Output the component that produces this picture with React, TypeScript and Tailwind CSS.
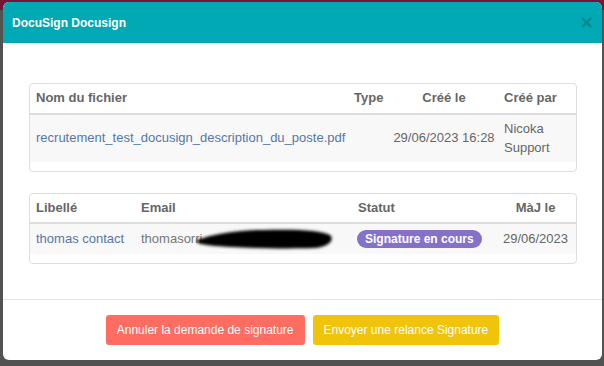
import React from 'react'

const files = [
  {
    name: 'recrutement_test_docusign_description_du_poste.pdf',
    type: '',
    createdAt: '29/06/2023 16:28',
    createdBy: 'Nicoka Support',
  },
]

const signers = [
  { label: 'thomas contact', email: 'thomasorri', status: 'Signature en cours', updatedAt: '29/06/2023' },
]

function CloseIcon() {
  return (
    <svg className="w-[11px] h-[11px]" viewBox="0 0 12 12" fill="none" stroke="currentColor" strokeWidth={2.6} strokeLinecap="square">
      <path d="M2 2l8 8M10 2l-8 8" />
    </svg>
  )
}

// scribble that hides the rest of the email
function Redacted() {
  return (
    <svg className="w-[144px] h-[32px] -ml-[9px] -my-[8px] shrink-0" viewBox="0 0 144 32">
      <defs>
        <filter id="blur" x="-10%" y="-40%" width="120%" height="180%">
          <feGaussianBlur stdDeviation="1.8" />
        </filter>
      </defs>
      <path
        d="M4 17 C 18 12, 40 7, 70 7 C 102 6, 128 7, 137 12 C 142 17, 136 24, 120 25 C 92 26, 50 25, 22 23 C 8 22, 2 20, 4 17 Z"
        fill="#000"
        filter="url(#blur)"
      />
    </svg>
  )
}

export default function App() {
  return (
    <div className="w-[604px] h-[366px] overflow-hidden bg-[linear-gradient(to_bottom,#74163a_0,#74163a_10px,#525252_10px)] pt-[2px] pl-[3px] font-['Liberation_Sans',Arial,sans-serif]">
      <div className="w-[599px] h-[358px] bg-white rounded-[6px] overflow-hidden flex flex-col">
        {/* Header */}
        <div className="h-[41px] shrink-0 bg-[#00a9b4] flex items-center justify-between pl-[9px] pr-[10px]">
          <h4 className="text-white font-bold text-[12px] leading-none">DocuSign Docusign</h4>
          <button className="text-[#00878f]">
            <CloseIcon />
          </button>
        </div>

        {/* Body */}
        <div className="flex-1 pt-[40px] pl-[26px] pr-[25px] flex flex-col gap-[21px] text-[13px] leading-[18.5px]">
          <div className="border border-[#dddddd] rounded-[4px] pb-[9px]">
            <div className="grid grid-cols-[319px_40px_110px_77px] h-[31px] items-center border-b-2 border-[#dddddd] font-bold text-[#666666]">
              <div className="pl-[6px]">Nom du fichier</div>
              <div className="pl-[5px]">Type</div>
              <div className="text-center">Créé le</div>
              <div className="pl-[5px]">Créé par</div>
            </div>
            {files.map((f) => (
              <div key={f.name} className="grid grid-cols-[319px_40px_110px_77px] h-[47px] items-center bg-[#f8f8f8]">
                <div className="pl-[6px] text-[#5577a6] whitespace-nowrap">{f.name}</div>
                <div className="pl-[5px] text-[#666666]">{f.type}</div>
                <div className="text-center text-[#666666] whitespace-nowrap">{f.createdAt}</div>
                <div className="pl-[5px] text-[#666666]">{f.createdBy}</div>
              </div>
            ))}
          </div>

          <div className="border border-[#dddddd] rounded-[4px] pb-[9px]">
            <div className="grid grid-cols-[105px_217px_143px_81px] h-[30px] items-center border-b-2 border-[#dddddd] font-bold text-[#666666]">
              <div className="pl-[6px]">Libellé</div>
              <div className="pl-[6px]">Email</div>
              <div className="pl-[6px]">Statut</div>
              <div className="text-center">MàJ le</div>
            </div>
            {signers.map((s) => (
              <div key={s.label} className="grid grid-cols-[105px_217px_143px_81px] h-[30px] items-center bg-[#f8f8f8]">
                <div className="pl-[6px] text-[#5577a6] whitespace-nowrap">{s.label}</div>
                <div className="pl-[6px] text-[#777777] flex items-center">
                  <span>{s.email}</span>
                  <Redacted />
                </div>
                <div className="pl-[5px]">
                  <span className="inline-flex items-center h-[18px] px-[8px] rounded-full bg-[#8572c8] text-white font-bold text-[12px] leading-none">
                    {s.status}
                  </span>
                </div>
                <div className="text-center text-[#666666]">{s.updatedAt}</div>
              </div>
            ))}
          </div>
        </div>

        {/* Footer */}
        <div className="h-[61px] shrink-0 border-t border-[#e5e5e5] flex items-center justify-center gap-2">
          <button className="h-[30px] px-[11px] rounded-[3px] bg-[#ff6c61] text-white text-[12px]">
            Annuler la demande de signature
          </button>
          <button className="h-[30px] px-[11px] rounded-[3px] bg-[#f0c40a] text-white text-[12px]">
            Envoyer une relance Signature
          </button>
        </div>
      </div>
    </div>
  )
}
